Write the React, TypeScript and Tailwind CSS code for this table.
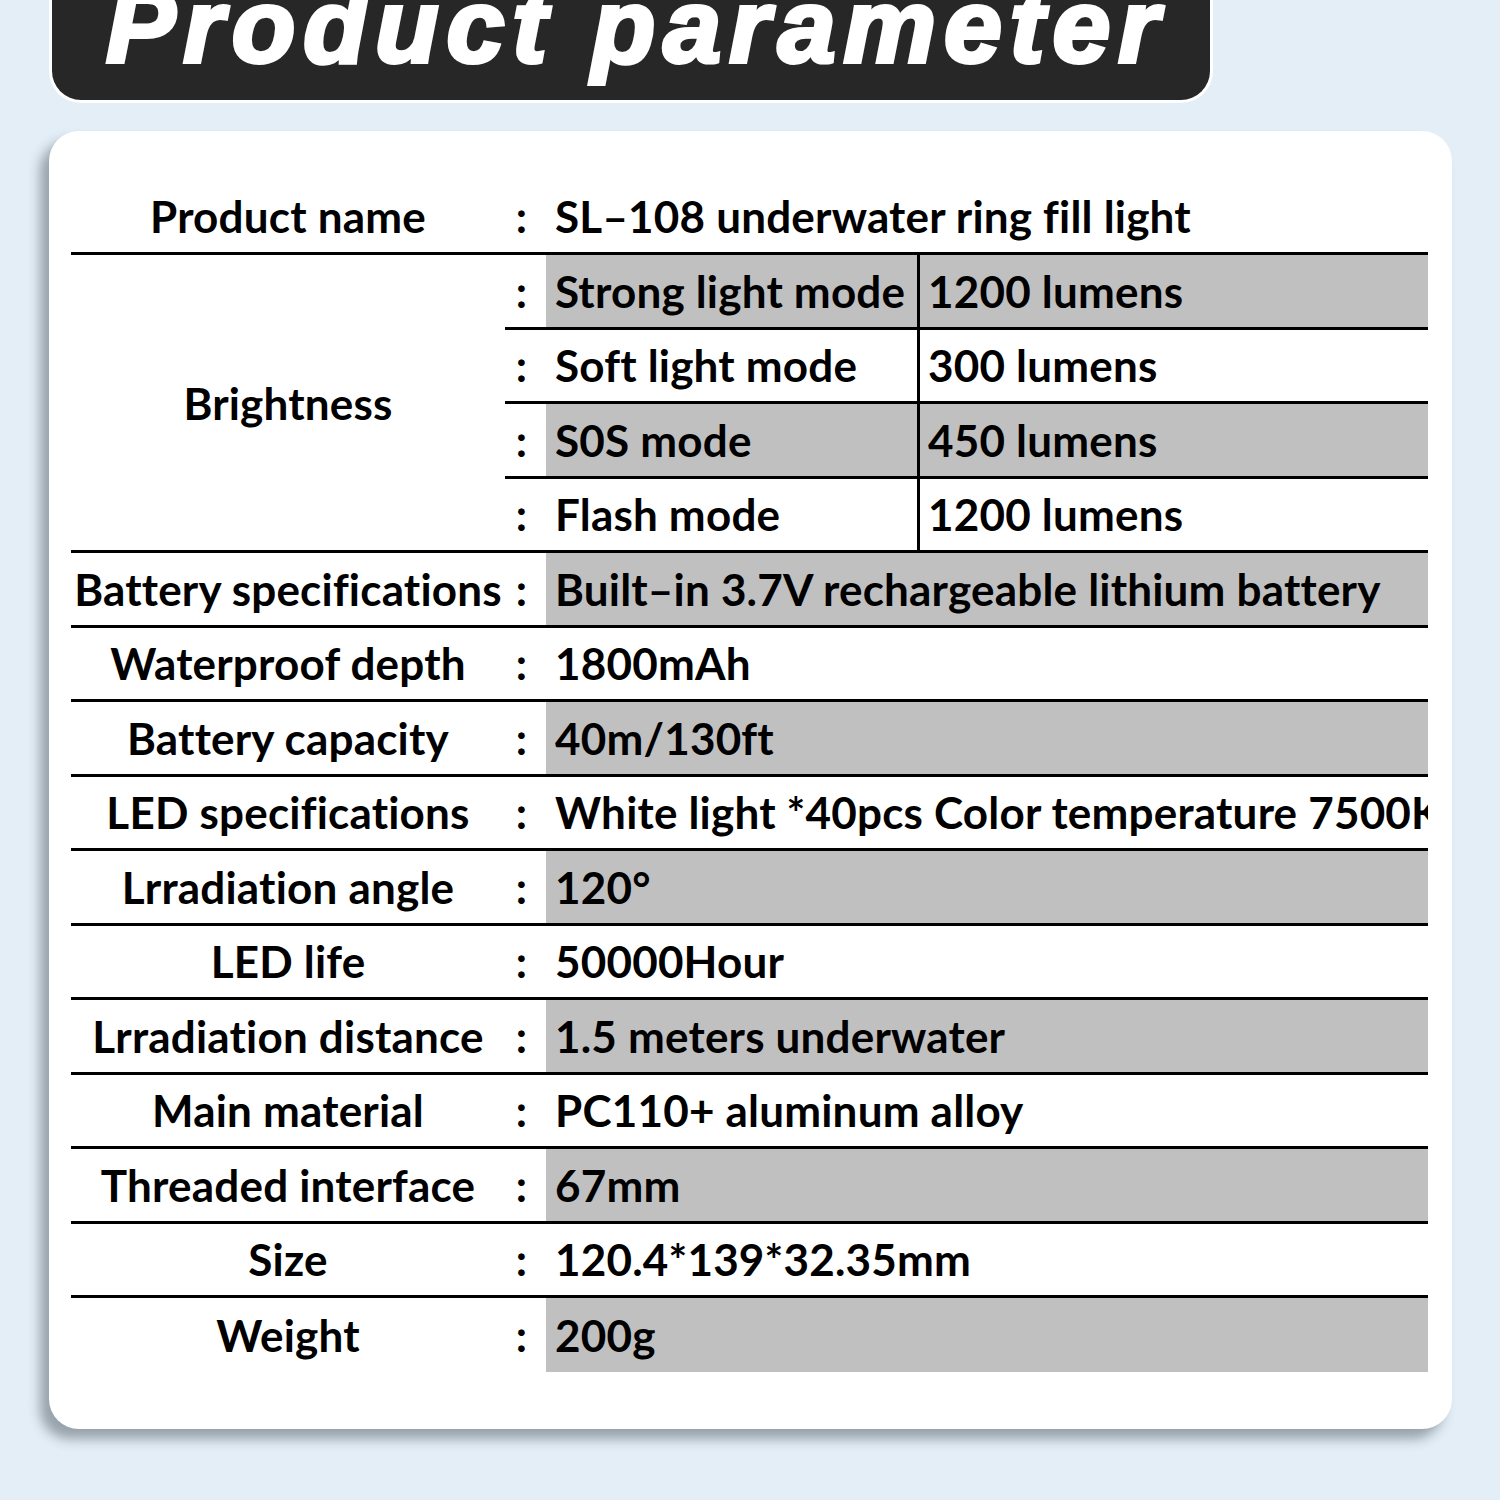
const rows: { label: string; value: string; gray: boolean }[] = [
  { label: "Battery specifications", value: "Built–in 3.7V rechargeable lithium battery", gray: true },
  { label: "Waterproof depth", value: "1800mAh", gray: false },
  { label: "Battery capacity", value: "40m/130ft", gray: true },
  { label: "LED specifications", value: "White light *40pcs Color temperature 7500K", gray: false },
  { label: "Lrradiation angle", value: "120°", gray: true },
  { label: "LED life", value: "50000Hour", gray: false },
  { label: "Lrradiation distance", value: "1.5 meters underwater", gray: true },
  { label: "Main material", value: "PC110+ aluminum alloy", gray: false },
  { label: "Threaded interface", value: "67mm", gray: true },
  { label: "Size", value: "120.4*139*32.35mm", gray: false },
  { label: "Weight", value: "200g", gray: true },
];

const modes = [
  { name: "Strong light mode", lm: "1200 lumens", gray: true },
  { name: "Soft light mode", lm: "300 lumens", gray: false },
  { name: "S0S mode", lm: "450 lumens", gray: true },
  { name: "Flash mode", lm: "1200 lumens", gray: false },
];

function Colon() {
  return <div className="flex w-[41px] shrink-0 items-center justify-center pr-[8px]">:</div>;
}

export default function App() {
  return (
    <div
      className="h-[1500px] w-[1500px] overflow-hidden bg-[#e3eef7] text-black"
      style={{ fontFamily: "Lato, 'Noto Sans', sans-serif" }}
    >
      {/* title bar */}
      <div className="ml-[49px] -mt-[40px] w-[1164px] rounded-b-[32px] bg-white p-[3px]">
        <div className="flex h-[137px] items-end rounded-b-[29px] bg-[#272727] pb-[22px] pl-[54px]">
          <h1
            className="whitespace-nowrap text-[104px] font-black italic leading-none tracking-[8px] text-white [-webkit-text-stroke:4px_white]"
            style={{ fontFamily: "'Liberation Sans', Arial, sans-serif" }}
          >
            Product parameter
          </h1>
        </div>
      </div>

      {/* card */}
      <div className="ml-[49px] mt-[28px] w-[1403px] rounded-[30px] bg-white pb-[57px] pl-[22px] pr-[24px] pt-[49px] shadow-[-9px_10px_12px_rgba(60,70,80,0.45)]">
        <div className="text-[44px] font-bold leading-none tracking-[0.2px]">
          {/* product name */}
          <div className="flex h-[75px] border-b-[3px] border-black">
            <div className="flex w-[434px] shrink-0 items-center justify-center">Product name</div>
            <Colon />
            <div className="flex flex-1 items-center pl-[9px]">SL–108 underwater ring fill light</div>
          </div>

          {/* brightness */}
          <div className="flex border-b-[3px] border-black">
            <div className="flex w-[434px] shrink-0 items-center justify-center">Brightness</div>
            <div className="flex flex-1 flex-col">
              {modes.map((m, i) => (
                <div
                  key={m.name}
                  className={`flex ${i < modes.length - 1 ? "h-[74.5px] border-b-[3px] border-black" : "h-[71.5px]"}`}
                >
                  <Colon />
                  <div className={`flex flex-1 ${m.gray ? "bg-[#c0c0c0]" : ""}`}>
                    <div className="flex w-[374px] shrink-0 items-center whitespace-nowrap border-r-[3px] border-black pl-[9px]">
                      {m.name}
                    </div>
                    <div className="flex flex-1 items-center pl-[8px]">{m.lm}</div>
                  </div>
                </div>
              ))}
            </div>
          </div>

          {rows.map((r, i) => (
            <div
              key={r.label}
              className={`flex ${i < rows.length - 1 ? "h-[74.5px] border-b-[3px] border-black" : "h-[74px]"}`}
            >
              <div className="flex w-[434px] shrink-0 items-center justify-center whitespace-nowrap">{r.label}</div>
              <Colon />
              <div
                className={`flex flex-1 items-center overflow-hidden whitespace-nowrap pl-[9px] ${r.gray ? "bg-[#c0c0c0]" : ""}`}
              >
                {r.value}
              </div>
            </div>
          ))}
        </div>
      </div>
    </div>
  );
}
